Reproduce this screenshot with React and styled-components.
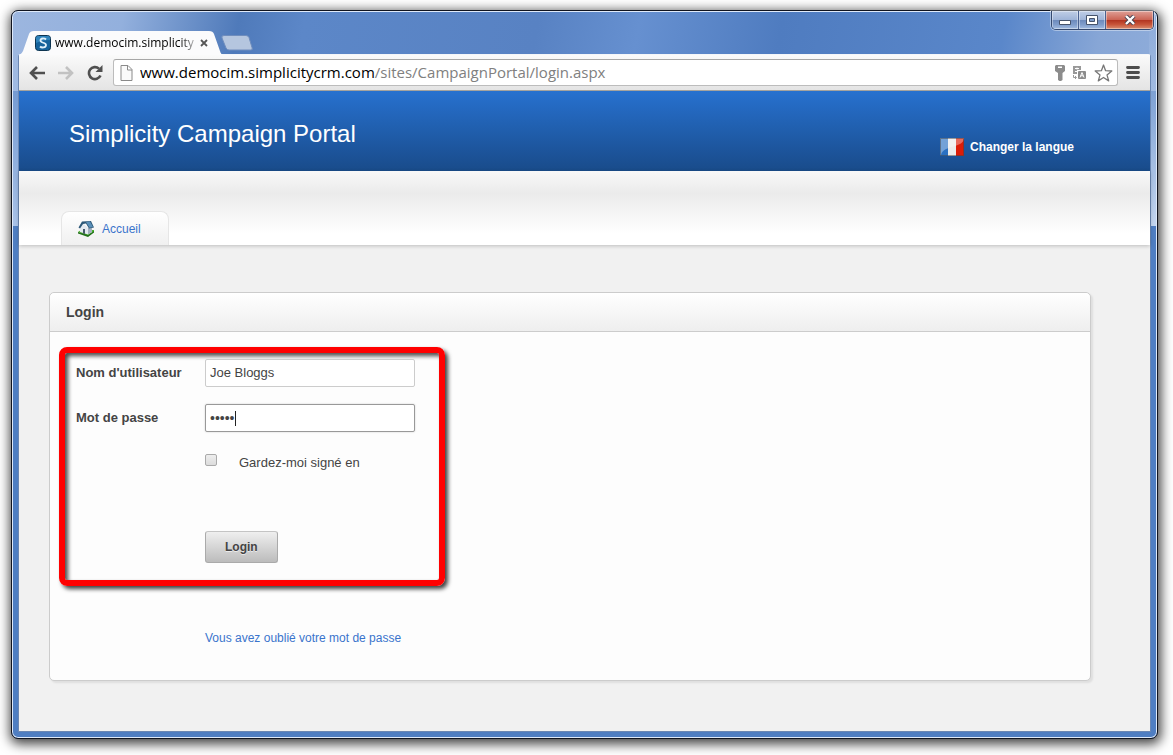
import { createGlobalStyle, styled } from 'styled-components';

const GlobalStyle = createGlobalStyle`
  * {
    box-sizing: border-box;
  }
  body {
    margin: 0;
    background: #fff;
    font-family: "Liberation Sans", Arial, sans-serif;
    font-size: 13px;
    color: #444;
  }
`

const Desktop = styled.div`
  min-height: 100vh;
  display: flex;
  padding: 10px 15px 16px 11px;
`

const BrowserWindow = styled.div`
  flex: 1;
  min-width: 0;
  display: flex;
  flex-direction: column;
  border: 1px solid #10141f;
  border-radius: 7px;
  background:
    linear-gradient(180deg, rgba(160, 186, 226, .1), #a9c2e8) left top / 8px 215px no-repeat,
    linear-gradient(180deg, rgba(130, 162, 214, .1), #c3d5ef) right top / 8px 215px no-repeat,
    linear-gradient(100deg, #9cb6df 0, #93b0dd 110px, #4f7aba 225px, #5c87c8 290px, #5882c3 520px, #6690d0 620px, #4f7cc0 760px, #5a87ca 980px, #87a6d6 1075px, #8eacda 100%) top / 100% 80px no-repeat,
    #4f7ec2;
  box-shadow: inset 0 0 0 1px #dfeafa, 1px 3px 12px 2px rgba(0, 0, 0, .75);
`

const TitleBar = styled.div`
  display: flex;
  justify-content: space-between;
  align-items: flex-start;
  height: 43px;
  padding: 0 3px 0 6px;
`

const TabStrip = styled.div`
  display: flex;
  align-self: flex-end;
`

const BrowserTab = styled.div`
  display: flex;
  align-items: center;
  gap: 4px;
  width: 206px;
  height: 25px;
  padding: 0 16px 0 17px;
  margin-bottom: -1px;
  background: #fbfbfc;
  clip-path: path("M0 25 Q3 25 5 21 L11 4 Q12 1 16 1 L191 1 Q195 1 196 4 L202 21 Q203 25 206 25 Z");
`

const TabTitle = styled.span`
  flex: 1;
  white-space: nowrap;
  font: 12px/18px "Open Sans", "Noto Sans", sans-serif;
  color: #000;
  mask-image: linear-gradient(90deg, #000 125px, transparent 145px);
`

const TabClose = styled.button`
  display: flex;
  padding: 0;
  border: 0;
  background: none;
`

const NewTab = styled.button`
  width: 32px;
  height: 16px;
  margin: 5px 0 0 -3px;
  padding: 0;
  border: 0;
  background: none;
`

const WindowControls = styled.div`
  display: flex;
  height: 19px;
  border: 1px solid #35496f;
  border-top: 0;
  border-radius: 0 0 5px 5px;
  overflow: hidden;
  box-shadow: 0 0 0 1px rgba(255, 255, 255, .4);
`

const ControlButton = styled.button`
  display: flex;
  align-items: center;
  justify-content: center;
  width: ${({ $close }) => $close ? '47px' : '27px'};
  padding: 0;
  border: 0;
  border-right: ${({ $close }) => $close ? '0' : '1px solid #4a6190'};
  background: ${({ $close }) => $close
    ? 'linear-gradient(180deg, #dfa097, #cb6455 48%, #b1321f 50%, #c8553a 75%, #d98e72)'
    : 'linear-gradient(180deg, #c0cee6, #9fb4d8 48%, #6c89bb 50%, #7f9cca 75%, #a2bbe0)'};
  box-shadow: inset 0 0 0 1px rgba(255, 255, 255, .4);
`

const Client = styled.div`
  flex: 1;
  display: flex;
  flex-direction: column;
  margin: 0 6px 6px;
  border: 1px solid #6b87b3;
  border-top-color: #f4f6f9;
  border-radius: 3px 3px 0 0;
  background: #f1f1f1;
`

const Toolbar = styled.div`
  display: flex;
  align-items: center;
  height: 36px;
  padding: 0 9px 0 3px;
  background: linear-gradient(180deg, #fafafa, #e4e4e4);
  border-bottom: 1px solid #a5a39e;
`

const ToolButton = styled.button`
  display: flex;
  justify-content: center;
  width: 29px;
  padding: 0;
  border: 0;
  background: none;

  &:last-child {
    width: 16px;
  }
`

const AddressBar = styled.div`
  flex: 1;
  display: flex;
  align-items: center;
  gap: 7px;
  height: 27px;
  margin: 0 7px 0 4px;
  padding: 0 4px 0 6px;
  border: 1px solid #bcbcbc;
  border-top-color: #a6a6a6;
  border-radius: 3px;
  background: #fff;
`

const Url = styled.span`
  flex: 1;
  white-space: nowrap;
  overflow: hidden;
  padding-bottom: 2px;
  font: 15px/22px "Open Sans", "Noto Sans", sans-serif;
  color: #808080;

  b {
    font-weight: normal;
    color: #000;
  }
`

const Header = styled.header`
  display: flex;
  justify-content: space-between;
  align-items: center;
  height: 80px;
  padding: 5px 76px 0 50px;
  background: linear-gradient(180deg, #2771cf, #194b8a);
`

const SiteTitle = styled.h1`
  margin: 0;
  font-size: 24px;
  line-height: 28px;
  font-weight: normal;
  color: #fff;
`

const LanguageLink = styled.a`
  display: flex;
  align-items: center;
  gap: 6px;
  margin-top: 26px;
  font-size: 12px;
  font-weight: bold;
  color: #fff;
  text-decoration: none;
`

const Nav = styled.nav`
  display: flex;
  align-items: flex-end;
  height: 74px;
  padding-left: 42px;
  background: linear-gradient(180deg, #f8f8f8, #ebebeb 30%, #fff 84%);
  box-shadow: 0 1px 4px rgba(0, 0, 0, .22);
`

const NavTab = styled.a`
  display: flex;
  align-items: center;
  gap: 8px;
  height: 34px;
  padding: 1px 27px 0 16px;
  border: 1px solid #e6e6e6;
  border-bottom: 0;
  border-radius: 8px 8px 0 0;
  background: linear-gradient(180deg, #fff, #f0f0f0);
  font-size: 12px;
  color: #3a74cc;
  text-decoration: none;
`

const Main = styled.main`
  padding: 47px 59px 40px 30px;
`

const Card = styled.section`
  border: 1px solid #ccc;
  border-radius: 5px;
  background: #fdfdfd;
  box-shadow: 2px 2px 2px rgba(0, 0, 0, .08);
`

const CardTitle = styled.h2`
  margin: 0;
  padding: 0 16px;
  border-bottom: 1px solid #ccc;
  border-radius: 5px 5px 0 0;
  background: linear-gradient(180deg, #fff, #eee);
  font-size: 14px;
  line-height: 38px;
  color: #444;
`

const CardBody = styled.div`
  padding: 15px 9px 32px;
`

const LoginForm = styled.form`
  display: grid;
  grid-template-columns: 129px 210px;
  grid-auto-rows: minmax(28px, auto);
  gap: 17px 0;
  align-items: center;
  width: fit-content;
  padding: 6px 24px 17px 11px;
  border: 6px solid #f00;
  border-radius: 8px;
  box-shadow: 3px 3px 4px rgba(0, 0, 0, .75), inset 3px 3px 4px rgba(0, 0, 0, .7);
`

const FieldLabel = styled.label`
  padding-bottom: 2px;
  font-weight: bold;
`

const TextInput = styled.input`
  width: 100%;
  height: 28px;
  padding: 0 4px 2px;
  border: 1px solid #ccc;
  border-radius: 2px;
  outline: 0;
  background: #fff;
  font: 13px "Liberation Sans", Arial, sans-serif;
  color: #444;

  &:focus {
    border-color: #999;
    box-shadow: 0 0 2px rgba(0, 0, 0, .2);
  }
`

const PasswordInput = styled(TextInput)`
  padding-bottom: 0;
  font-size: 14px;
  caret-color: transparent;

  &:focus {
    background: linear-gradient(#222, #222) 29px center / 1px 15px no-repeat #fff;
  }
`

const RememberLabel = styled.label`
  grid-column: 2;
  display: flex;
  align-items: center;
  gap: 22px;
  padding-bottom: 2px;
`

const CheckBox = styled.input`
  appearance: none;
  width: 12px;
  height: 12px;
  margin: 0 0 4px;
  border: 1px solid #aaa;
  border-radius: 2px;
  background: linear-gradient(180deg, #eee, #dcdcdc);
`

const LoginButton = styled.button`
  grid-column: 2;
  justify-self: start;
  height: 32px;
  margin-top: 37px;
  padding: 0 19px;
  border: 1px solid #aaa;
  border-top-color: #c4c4c4;
  border-radius: 3px;
  background: linear-gradient(180deg, #efefef, #bcbcbc);
  font: bold 12px "Liberation Sans", Arial, sans-serif;
  color: #444;
  text-shadow: 0 1px 0 rgba(255, 255, 255, .6);
`

const ForgotLink = styled.a`
  display: block;
  margin: 42px 0 0 146px;
  font-size: 12px;
  line-height: 20px;
  color: #3a74cc;
  text-decoration: none;
`

const Favicon = () => (
  <svg width="16" height="16" viewBox="0 0 16 16">
    <rect x=".5" y=".5" width="15" height="15" rx="3" fill="#15629b" stroke="#0d3450" />
    <path d="M1 8V3q0-2 2-2h10q2 0 2 2v2Q7 5 1 8z" fill="#2f83bb" />
    <path d="M11 4.5C9.5 3 5.5 3 5.5 5.500C5.500 8.500 11 7 11 10C11 13 6.500 13 5 11.500" fill="none" stroke="#dff0fa" strokeWidth="1.800" />
  </svg>
)

const BackIcon = ({ color }) => (
  <svg width="16" height="14" viewBox="0 0 16 14" fill="none" stroke={color} strokeWidth="2.6">
    <path d="M8 1L2 7l6 6M2 7h14" />
  </svg>
)

const ForwardIcon = ({ color }) => (
  <svg width="16" height="14" viewBox="0 0 16 14" fill="none" stroke={color} strokeWidth="2.6">
    <path d="M8 1l6 6-6 6M14 7H0" />
  </svg>
)

const ReloadIcon = () => (
  <svg width="16" height="16" viewBox="0 0 16 16">
    <path d="M13.500 10.500A6 6 0 1 1 12 3.600" fill="none" stroke="#505050" strokeWidth="2.600" />
    <path d="M15.500 0v7H8.500z" fill="#505050" />
  </svg>
)

const PageIcon = () => (
  <svg width="13" height="16" viewBox="0 0 13 16" fill="#fafafa" stroke="#8a8a8a">
    <path d="M1 .5h7l4 4v11H1zM7.500 .5V5H12" />
  </svg>
)

const KeyIcon = () => (
  <svg width="10" height="16" viewBox="0 0 10 16" fill="#8c8c8c">
    <path d="M1 0h8l1 1v5L7.500 8v7L6 16H4.500L3 15V8L0 6V1z" />
    <path d="M3 1.500h4v1.500H3z" fill="#fff" />
  </svg>
)

const TranslateIcon = () => (
  <svg width="15" height="14" viewBox="0 0 15 14">
    <path d="M1 0h8v4H5v4H1z" fill="#999" />
    <path d="M3 2.500h4M5 1.500v2M3 5.500h2" stroke="#fff" />
    <rect x="6" y="5" width="8" height="8" rx="1" fill="#8c8c8c" />
    <path d="M8 11.500l2-5 2 5M8.800 9.800h2.400" stroke="#fff" fill="none" />
    <path d="M1.500 9v2.500H4M3 10l1.500 1.500L3 13" stroke="#999" fill="none" />
  </svg>
)

const StarIcon = () => (
  <svg width="19" height="18" viewBox="0 0 19 18">
    <path d="M9.500 1l2.100 5.700 6.200.3-4.800 3.900 1.700 6-5.200-3.400-5.200 3.400 1.700-6L1.200 7l6.200-.3z" fill="#fff" stroke="#777" strokeWidth="1.300" strokeLinejoin="round" />
  </svg>
)

const MenuIcon = () => (
  <svg width="14" height="13" viewBox="0 0 14 13">
    <path d="M1.500 1.500h11M1.500 6.500h11M1.500 11.500h11" stroke="#4d4d4d" strokeWidth="2.800" strokeLinecap="round" />
  </svg>
)

const FrenchFlag = () => (
  <svg width="24" height="18" viewBox="0 0 24 18">
    <path d="M0 0h8v18H0z" fill="#2a70c2" />
    <path d="M8 0h8v18H8z" fill="#ececec" />
    <path d="M16 0h8v18h-8z" fill="#dc1c08" />
    <path d="M0 0h24C23 11 4 6 1 17H0z" fill="#fff" opacity=".35" />
    <rect x=".5" y=".5" width="23" height="17" fill="none" stroke="#444" opacity=".5" />
  </svg>
)

const HouseIcon = () => (
  <svg width="16" height="16" viewBox="0 0 16 16">
    <path d="M0 11l3-2 13 0v2l-6 4z" fill="#4db52c" />
    <path d="M0 11l10 3 6-4v1.500L10 16 0 12.500z" fill="#23701a" />
    <path d="M2 6l3-4 5 5 4-1v5l-4 2.500-8-2.500z" fill="#e3e9f0" />
    <path d="M10 7l4-1v5l-4 2.500z" fill="#a3b0bf" />
    <path d="M4 .5l9-.5 3 6.500-5 1L8 2.500 5 3 2 7.500.5 6.500z" fill="#2d5878" />
    <path d="M8 1l4-.5 3 5.500-3.500.8z" fill="#5a8fb8" />
    <path d="M5 8h2v5l-2-.6z" fill="#46586a" />
  </svg>
)

const App = () => {
  return (
    <Desktop>
      <GlobalStyle />
      <BrowserWindow>
        <TitleBar>
          <TabStrip>
            <BrowserTab>
              <Favicon />
              <TabTitle>www.democim.simplicity</TabTitle>
              <TabClose aria-label="Close tab">
                <svg width="8" height="8" viewBox="0 0 8 8">
                  <path d="M1 1l6 6M7 1L1 7" stroke="#555" strokeWidth="1.800" />
                </svg>
              </TabClose>
            </BrowserTab>
            <NewTab aria-label="New tab">
              <svg width="32" height="16" viewBox="0 0 32 16">
                <path d="M3 .5h22q2 0 3 2l3 10q1 2.500-1 2.500H8q-2 0-3-2L1 3Q0 .5 3 .5z" fill="#b5c6df" stroke="#6f8dbd" />
              </svg>
            </NewTab>
          </TabStrip>
          <WindowControls>
            <ControlButton aria-label="Minimize">
              <svg width="12" height="12" viewBox="0 0 12 12">
                <path d="M.5 6.500h11v4H.5z" fill="#fff" stroke="#46536b" />
              </svg>
            </ControlButton>
            <ControlButton aria-label="Maximize">
              <svg width="12" height="10" viewBox="0 0 12 10">
                <path d="M.5 .5h11v9H.5z" fill="#fff" stroke="#46536b" />
                <path d="M3.500 3.500h5v3h-5z" fill="#7f9cca" stroke="#46536b" />
              </svg>
            </ControlButton>
            <ControlButton $close aria-label="Close">
              <svg width="12" height="10" viewBox="0 0 12 10">
                <path d="M2 1l8 8M10 1L2 9" stroke="#46404f" strokeWidth="4.200" />
                <path d="M2 1l8 8M10 1L2 9" stroke="#fff" strokeWidth="2.400" />
              </svg>
            </ControlButton>
          </WindowControls>
        </TitleBar>
        <Client>
          <Toolbar>
            <ToolButton aria-label="Back"><BackIcon color="#505050" /></ToolButton>
            <ToolButton aria-label="Forward"><ForwardIcon color="#c2c2c2" /></ToolButton>
            <ToolButton aria-label="Reload"><ReloadIcon /></ToolButton>
            <AddressBar>
              <PageIcon />
              <Url><b>www.democim.simplicitycrm.com</b>/sites/CampaignPortal/login.aspx</Url>
              <KeyIcon />
              <TranslateIcon />
              <StarIcon />
            </AddressBar>
            <ToolButton aria-label="Menu"><MenuIcon /></ToolButton>
          </Toolbar>
          <Header>
            <SiteTitle>Simplicity Campaign Portal</SiteTitle>
            <LanguageLink href="#langue">
              <FrenchFlag />
              Changer la langue
            </LanguageLink>
          </Header>
          <Nav>
            <NavTab href="#accueil">
              <HouseIcon />
              Accueil
            </NavTab>
          </Nav>
          <Main>
            <Card>
              <CardTitle>Login</CardTitle>
              <CardBody>
                <LoginForm onSubmit={(e) => e.preventDefault()}>
                  <FieldLabel htmlFor="username">Nom d'utilisateur</FieldLabel>
                  <TextInput id="username" type="text" defaultValue="Joe Bloggs" />
                  <FieldLabel htmlFor="password">Mot de passe</FieldLabel>
                  <PasswordInput id="password" type="password" defaultValue="login" autoFocus />
                  <RememberLabel>
                    <CheckBox type="checkbox" />
                    Gardez-moi signé en
                  </RememberLabel>
                  <LoginButton type="submit">Login</LoginButton>
                </LoginForm>
                <ForgotLink href="#oublie">Vous avez oublié votre mot de passe</ForgotLink>
              </CardBody>
            </Card>
          </Main>
        </Client>
      </BrowserWindow>
    </Desktop>
  );
}

export default App;
